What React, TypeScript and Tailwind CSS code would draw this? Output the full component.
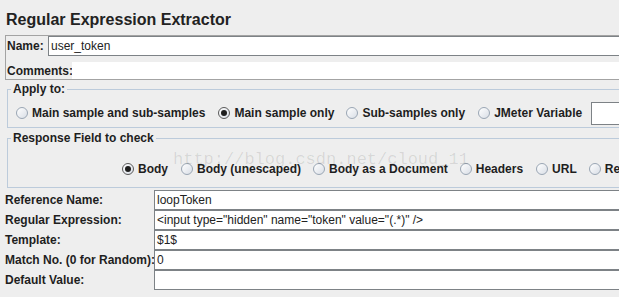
import React from "react";

function Radio({ label, checked = false, className = "" }: { label: string; checked?: boolean; className?: string }) {
  return (
    <div className={"flex items-center shrink-0 whitespace-nowrap " + className}>
      <span
        className={
          "flex h-[12px] w-[12px] items-center justify-center rounded-full border bg-gradient-to-br from-white to-[#d9dee6] " +
          (checked ? "border-[#5a5a5a]" : "border-[#9aa6b4]")
        }
      >
        {checked && <span className="h-[6px] w-[6px] rounded-full bg-[#1e1e1e]" />}
      </span>
      <span className="ml-[4px] font-bold">{label}</span>
    </div>
  );
}

function Field({ label, value }: { label: string; value: string }) {
  return (
    <div className="flex h-[20px] items-stretch">
      <div className="flex w-[149px] shrink-0 items-center whitespace-nowrap font-bold">{label}</div>
      <div className="flex flex-1 items-center whitespace-nowrap border border-r-0 border-[#7d8286] bg-white pl-[2px] text-[#222]">
        {value}
      </div>
    </div>
  );
}

export default function App() {
  return (
    <div className="relative h-[297px] w-[619px] overflow-hidden bg-[#eeeeee] font-['Liberation_Sans',Arial,sans-serif] text-[12px] text-[#1e1e1e]">
      <div className="w-[680px]">
        {/* title */}
        <div className="h-[35px] pl-[6px] pt-[9px] text-[16px] leading-[22px] font-bold text-[#222]">
          Regular Expression Extractor
        </div>

        {/* name / comments */}
        <div className="ml-[5px] flex flex-col border border-r-0 border-[#a3a3a3]">
          <div className="flex h-[20px] items-stretch">
            <span className="flex w-[42px] shrink-0 items-center pl-[1px] font-bold">Name:</span>
            <div className="flex flex-1 items-center border border-r-0 border-[#7d8286] bg-white pl-[2px] text-[#222]">
              user_token
            </div>
          </div>
          <div className="mt-[6px] flex h-[17px] items-stretch">
            <span className="flex w-[66px] shrink-0 items-center pl-[1px] font-bold">Comments:</span>
            <div className="flex-1 bg-white" />
          </div>
        </div>

        {/* apply to */}
        <fieldset className="ml-[7px] mt-[2px] h-[46px] border border-r-0 border-[#bccbdb]">
          <legend className="ml-[3px] px-[2px] font-bold leading-[14px]">Apply to:</legend>
          <div className="mt-[5px] flex h-[24px] items-center pl-[8px]">
            <Radio label="Main sample and sub-samples" />
            <Radio label="Main sample only" checked className="ml-[13px]" />
            <Radio label="Sub-samples only" className="ml-[12px]" />
            <Radio label="JMeter Variable" className="ml-[13px]" />
            <div className="ml-[9px] h-[23px] w-[80px] border border-r-0 border-[#7d8286] bg-white" />
          </div>
        </fieldset>

        {/* response field */}
        <fieldset className="ml-[7px] mt-[3px] h-[57px] border border-r-0 border-[#bccbdb]">
          <legend className="ml-[3px] px-[2px] font-bold leading-[14px]">Response Field to check</legend>
          <div className="mt-[14px] flex h-[20px] items-center pl-[114px]">
            <Radio label="Body" checked />
            <Radio label="Body (unescaped)" className="ml-[13px]" />
            <Radio label="Body as a Document" className="ml-[12px]" />
            <Radio label="Headers" className="ml-[12px]" />
            <Radio label="URL" className="ml-[13px]" />
            <Radio label="Response Code" className="ml-[12px]" />
          </div>
        </fieldset>

        {/* fields */}
        <div className="ml-[5px] mt-[2px] flex flex-col">
          <Field label="Reference Name:" value="loopToken" />
          <Field label="Regular Expression:" value={'<input type="hidden" name="token" value="(.*)" />'} />
          <Field label="Template:" value="$1$" />
          <Field label="Match No. (0 for Random):" value="0" />
          <Field label="Default Value:" value="" />
        </div>
      </div>

      {/* watermark */}
      <div className="pointer-events-none absolute left-[173px] top-[150px] font-['Liberation_Mono',monospace] text-[17px] leading-[20px] text-[#000000]/[0.1]">
        http://blog.csdn.net/cloud_11
      </div>
    </div>
  );
}
